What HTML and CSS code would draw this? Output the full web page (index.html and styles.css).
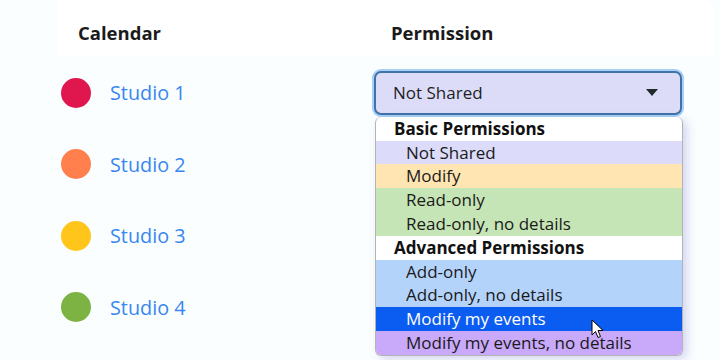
FILE: index.html
```html
<!DOCTYPE html>
<html lang="en">
<head>
    <meta charset="UTF-8">
    <meta name="viewport" content="width=device-width, initial-scale=1.0">
    <title>Calendar Sharing</title>
    <link rel="stylesheet" href="styles.css">
</head>
<body>
    <div class="sharing">
        <div class="header">
            <div class="col-name">Calendar</div>
            <div class="col-perm">Permission</div>
        </div>

        <div class="row">
            <div class="calendar">
                <span class="dot" style="background: #e0164f"></span>
                <span class="name">Studio 1</span>
            </div>
            <div class="perm">
                <div class="select open">
                    <span>Not Shared</span>
                    <span class="arrow"></span>
                </div>
                <ul class="options">
                    <li class="group">Basic Permissions</li>
                    <li class="opt lavender">Not Shared</li>
                    <li class="opt yellow">Modify</li>
                    <li class="opt green">Read-only</li>
                    <li class="opt green">Read-only, no details</li>
                    <li class="group">Advanced Permissions</li>
                    <li class="opt blue">Add-only</li>
                    <li class="opt blue">Add-only, no details</li>
                    <li class="opt active">Modify my events</li>
                    <li class="opt purple">Modify my events, no details</li>
                </ul>
                <svg class="cursor" width="14" height="20" viewBox="0 0 14 20">
                    <path d="M1 1 L1 16 L4.5 12.5 L7 18.5 L9.5 17.5 L7 11.5 L12 11.5 Z" fill="#fff" stroke="#000" stroke-width="1"/>
                </svg>
            </div>
        </div>

        <div class="row">
            <div class="calendar">
                <span class="dot" style="background: #ff7f4d"></span>
                <span class="name">Studio 2</span>
            </div>
        </div>

        <div class="row">
            <div class="calendar">
                <span class="dot" style="background: #ffc51a"></span>
                <span class="name">Studio 3</span>
            </div>
        </div>

        <div class="row">
            <div class="calendar">
                <span class="dot" style="background: #7cb342"></span>
                <span class="name">Studio 4</span>
            </div>
        </div>
    </div>
</body>
</html>
```

FILE: styles.css
```css
body {
    font-family: 'Open Sans', 'Noto Sans', sans-serif;
    margin: 0;
    width: 720px;
    height: 360px;
    overflow: hidden;
    background: #fbfefe;
    color: #1a1a1a;
}

.sharing {
    padding-left: 58px;
    padding-right: 6px;
}

.header {
    display: grid;
    grid-template-columns: 314px 1fr;
    box-sizing: border-box;
    height: 57px;
    padding-top: 7px;
    background: #fff;
    border-top-right-radius: 10px;
    font-size: 18.5px;
    font-weight: 700;
    align-items: center;
}

.col-name {
    padding-left: 20px;
}

.col-perm {
    padding-left: 19px;
}

.row {
    display: grid;
    grid-template-columns: 314px 1fr;
    height: 71.5px;
    align-items: center;
}

.calendar {
    display: flex;
    align-items: center;
    padding-left: 3px;
}

.dot {
    width: 30px;
    height: 30px;
    border-radius: 50%;
}

.name {
    margin-left: 19px;
    font-size: 19.8px;
    color: #3886f2;
}

.perm {
    position: relative;
    padding-left: 2px;
    width: 308px;
}

.select {
    display: flex;
    align-items: center;
    justify-content: space-between;
    box-sizing: border-box;
    height: 44px;
    padding: 0 22px 0 17px;
    background: #dcdcf9;
    border: 2px solid #3f74a6;
    border-radius: 7px;
    box-shadow: 0 0 0 2px #a8d0f6;
    font-size: 17px;
    color: #1f1f1f;
}

.arrow {
    width: 0;
    height: 0;
    border-left: 6px solid transparent;
    border-right: 6px solid transparent;
    border-top: 7px solid #1f2a2a;
}

.options {
    position: absolute;
    top: 46px;
    left: 3px;
    width: 306px;
    margin: 0;
    padding: 0;
    list-style: none;
    background: #fff;
    border: 1px solid #b4b4b4;
    border-top: none;
    border-radius: 6px;
    overflow: hidden;
    box-shadow: 4px 3px 10px rgba(90, 90, 200, 0.25);
    font-size: 17px;
    line-height: 23.8px;
    z-index: 2;
}

.group {
    padding-left: 18px;
    font-weight: 700;
    color: #111;
}

.opt {
    padding-left: 30px;
    color: #1a1a1a;
}

.lavender { background: #dcdcfa; }
.yellow { background: #ffe5b2; }
.green { background: #c6e5b6; }
.blue { background: #b4d3fb; }
.purple { background: #c9a9f9; }

.opt.active {
    background: #0b5cf0;
    color: #fff;
}

.cursor {
    position: absolute;
    top: 248px;
    left: 219px;
    z-index: 3;
}
```
